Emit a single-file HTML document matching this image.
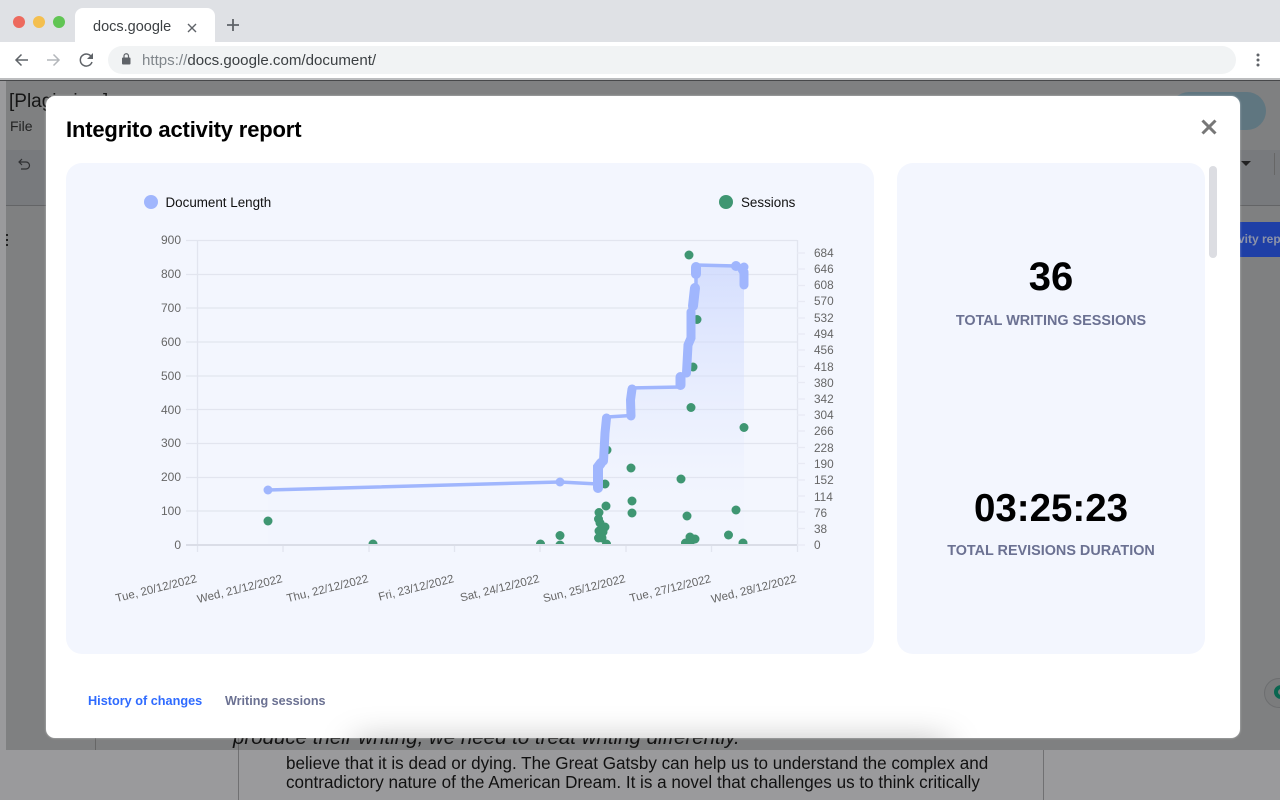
<!DOCTYPE html>
<html><head><meta charset="utf-8"><title>Integrito activity report</title>
<style>
*{box-sizing:border-box}
html,body{margin:0;padding:0;width:1280px;height:800px;overflow:hidden;background:#fff;font-family:"Liberation Sans",sans-serif}
.a{position:absolute}
#top{left:0;top:0;width:1280px;height:42px;background:#dfe1e5}
.dot{width:12px;height:12px;border-radius:50%;top:16px}
#tab{left:75px;top:8px;width:140px;height:34px;background:#fff;border-radius:8px 8px 0 0}
#bar{left:0;top:42px;width:1280px;height:37px;background:#fff}
#url{left:108px;top:46px;width:1128px;height:28px;border-radius:14px;background:#f1f3f4}
#page{left:0;top:79px;width:1280px;height:721px;background:#9a9a9c;overflow:hidden}
#dark{left:6px;top:2px;width:1274px;height:669px;background:#7f8081;overflow:hidden}
#modal{left:46px;top:96px;width:1194px;height:642px;background:#fff;border-radius:9px;overflow:hidden;box-shadow:0 0 2px rgba(255,255,255,.5)}
.card{background:#f3f6fe;border-radius:16px}
.stat{color:#000;font-weight:bold;text-align:center;left:897px;width:308px}
.lab{color:#6b7192;font-weight:bold;text-align:center;left:897px;width:308px;font-size:14.4px;white-space:nowrap}
svg text{font-family:"Liberation Sans",sans-serif}
</style></head><body>
<div class="a" id="top"></div>
<div class="a dot" style="left:13px;background:#ed6a5e"></div>
<div class="a dot" style="left:33px;background:#f4bf4f"></div>
<div class="a dot" style="left:53px;background:#61c554"></div>
<div class="a" id="tab"></div>
<div class="a" style="left:93px;top:19px;font-size:14.5px;color:#3c4043">docs.google</div>
<svg class="a" style="left:0;top:0" width="260" height="80" fill="none">
<path d="M188 24l8 8M196 24l-8 8" stroke="#5f6368" stroke-width="1.4"/>
<path d="M233 19v12M227 25h12" stroke="#5f6368" stroke-width="1.8"/>
</svg>
<div class="a" id="bar"></div>
<div class="a" id="url"></div>
<svg class="a" style="left:0;top:42px" width="140" height="36" fill="none">
<path d="M28 18H16M21.500 12.500L16 18l5.500 5.500" stroke="#5f6368" stroke-width="1.500"/>
<path d="M47 18h12M53.500 12.500L59 18l-5.500 5.500" stroke="#b4b7bb" stroke-width="1.500"/>
<path d="M91.500 15A6 6 0 1 0 92 20" stroke="#5f6368" stroke-width="1.500"/>
<path d="M93 11v6h-6z" fill="#5f6368"/>
<rect x="122" y="15.500" width="8.500" height="7" rx="1" fill="#5f6368"/>
<path d="M124 16v-2a2.200 2.200 0 0 1 4.500 0v2" stroke="#5f6368" stroke-width="1.200"/>
</svg>
<div class="a" style="left:142px;top:52px;font-size:15.100px;color:#80868b;white-space:nowrap">https://<span style="color:#3c4043">docs.google.com/document/</span></div>
<svg class="a" style="left:1250px;top:50px" width="16" height="20"><circle cx="8" cy="5" r="1.500" fill="#5f6368"/><circle cx="8" cy="10" r="1.500" fill="#5f6368"/><circle cx="8" cy="15" r="1.500" fill="#5f6368"/></svg>

<div class="a" id="page">
  <div class="a" id="dark">
    <div class="a" style="left:0;top:69px;width:1274px;height:56px;background:#787a7d"></div>
    <div class="a" style="left:0;top:124px;width:1274px;height:1px;background:#636466"></div>
    <div class="a" style="left:3px;top:10px;font-size:19px;color:#151515;white-space:nowrap">[Plagiarism]</div>
    <div class="a" style="left:4px;top:37px;font-size:14px;color:#222">File</div>
    <svg class="a" style="left:11px;top:76px" width="16" height="16" fill="none"><path d="M2 5h7a3.500 3.500 0 0 1 0 7H4M5 2L2 5l3 3" stroke="#2f3032" stroke-width="1.200"/></svg>
    <div class="a" style="left:0;top:153px;width:2px;height:2px;background:#222;box-shadow:0 5px 0 #222,0 10px 0 #222"></div>
    <div class="a" style="left:1164px;top:11px;width:96px;height:38px;border-radius:19px;background:#5f7680"></div>
    <div class="a" style="left:1235px;top:80px;border-left:5px solid transparent;border-right:5px solid transparent;border-top:5px solid #222"></div>
    <div class="a" style="left:1268px;top:72px;width:1px;height:22px;background:#666"></div>
    <div class="a" style="left:1230px;top:141px;width:44px;height:35px;background:#1f3fa6;color:#8d93a8;font-size:12px;font-weight:bold;line-height:35px;white-space:nowrap;overflow:hidden;text-indent:2px">vity report</div>
    <div class="a" style="left:1258px;top:597px;width:30px;height:30px;border-radius:50%;border:1px solid #6d6e70;background:#7b7c7d"></div>
    <div class="a" style="left:1268px;top:604px;width:14px;height:14px;border-radius:50%;border:4px solid #0a6650"></div>
    <div class="a" style="left:89px;top:650px;width:1px;height:19px;background:#666"></div>
    <div class="a" style="left:232px;top:650px;width:1px;height:19px;background:#666"></div>
    <div class="a" style="left:227px;top:645px;font-size:20.500px;font-style:italic;color:#111;white-space:nowrap">produce their writing, we need to treat writing differently.</div>
  </div>
  <div class="a" style="left:238px;top:671px;width:1px;height:50px;background:#707072"></div>
  <div class="a" style="left:1043px;top:671px;width:1px;height:50px;background:#707072"></div>
  <div class="a" style="left:286px;top:675px;font-size:17.080px;line-height:19px;color:#111;white-space:nowrap">believe that it is dead or dying. The Great Gatsby can help us to understand the complex and<br>contradictory nature of the American Dream. It is a novel that challenges us to think critically</div>
</div>
<div class="a" style="left:0;top:78px;width:1280px;height:2px;background:#bcbdbf"></div>
<div class="a" style="left:0;top:80px;width:1280px;height:1px;background:#47484a"></div>

<div class="a" id="modal">
  <div class="a" style="left:310px;top:648px;width:590px;height:22px;background:rgba(0,0,0,.36);filter:blur(17px)"></div>
</div>
<div class="a" style="left:66px;top:117px;font-size:22px;letter-spacing:-.17px;font-weight:bold;color:#000;white-space:nowrap">Integrito activity report</div>
<svg class="a" style="left:1200px;top:118px" width="18" height="18" fill="none"><path d="M2.500 2.500l13 13M15.500 2.500l-13 13" stroke="#777" stroke-width="3"/></svg>
<div class="a card" style="left:66px;top:163px;width:808px;height:491px"></div>
<div class="a card" style="left:897px;top:163px;width:308px;height:491px"></div>
<div class="a" style="left:1209px;top:166px;width:8px;height:92px;border-radius:4px;background:#dcdde2"></div>
<div class="a stat" style="top:254px;font-size:40px;line-height:46px">36</div>
<div class="a lab" style="top:313px">TOTAL WRITING SESSIONS</div>
<div class="a stat" style="top:486px;font-size:38.500px;line-height:46px">03:25:23</div>
<div class="a lab" style="top:543px">TOTAL REVISIONS DURATION</div>
<div class="a" style="left:88px;top:694px;font-size:12.700px;font-weight:bold;color:#2f6bff;white-space:nowrap">History of changes</div>
<div class="a" style="left:225px;top:694px;font-size:12.600px;font-weight:bold;color:#6b7192;white-space:nowrap">Writing sessions</div>

<svg class="a" style="left:0;top:0" width="1280" height="800" fill="none">
<defs>
<linearGradient id="g" x1="0" y1="265" x2="0" y2="500" gradientUnits="userSpaceOnUse"><stop offset="0" stop-color="#c9d5fd" stop-opacity=".72"/><stop offset="1" stop-color="#dfe6fe" stop-opacity=".05"/></linearGradient>
<clipPath id="c"><rect x="190" y="230" width="620" height="315"/></clipPath>
</defs>
<circle cx="151" cy="202" r="7" fill="#a0b6fd"/>
<text x="165.500" y="207" font-size="13.400" fill="#111">Document Length</text>
<circle cx="726" cy="202" r="7" fill="#3f9672"/>
<text x="741" y="207" font-size="13.400" fill="#111">Sessions</text>

<g stroke="#e2e5ef" stroke-width="1.300">
<path d="M186 240.500H797M186 274.500H797M186 308H797M186 342H797M186 376H797M186 409.500H797M186 443.500H797M186 477.500H797M186 511H797"/>
<path d="M197.500 240V552M797.500 240V552"/>
<path d="M283 545v7M369 545v7M454.500 545v7M540 545v7M626 545v7M711.500 545v7"/>
<path stroke="#e8eaf4" d="M797 253h8M797 269h8M797 285.500h8M797 301.500h8M797 318h8M797 334h8M797 350h8M797 366.500h8M797 382.500h8M797 399h8M797 415h8M797 431h8M797 447.500h8M797 463.500h8M797 480h8M797 496h8M797 512h8M797 528.500h8M797 545h8"/>
</g>
<g font-size="12" fill="#666" text-anchor="end">
<text x="181" y="244">900</text><text x="181" y="278">800</text><text x="181" y="312">700</text><text x="181" y="346">600</text><text x="181" y="380">500</text><text x="181" y="414">400</text><text x="181" y="447">300</text><text x="181" y="481">200</text><text x="181" y="515">100</text><text x="181" y="549">0</text>
</g>
<g font-size="11.800" fill="#666">
<text x="814" y="257">684</text><text x="814" y="273">646</text><text x="814" y="289">608</text><text x="814" y="305">570</text><text x="814" y="322">532</text><text x="814" y="338">494</text><text x="814" y="354">456</text><text x="814" y="371">418</text><text x="814" y="387">380</text><text x="814" y="403">342</text><text x="814" y="419">304</text><text x="814" y="435">266</text><text x="814" y="452">228</text><text x="814" y="468">190</text><text x="814" y="484">152</text><text x="814" y="501">114</text><text x="814" y="517">76</text><text x="814" y="533">38</text><text x="814" y="549">0</text>
</g>
<g font-size="11.500" fill="#666" text-anchor="end">
<text transform="translate(197.500 582) rotate(-14)">Tue, 20/12/2022</text>
<text transform="translate(283 582) rotate(-14)">Wed, 21/12/2022</text>
<text transform="translate(369 582) rotate(-14)">Thu, 22/12/2022</text>
<text transform="translate(454.500 582) rotate(-14)">Fri, 23/12/2022</text>
<text transform="translate(540 582) rotate(-14)">Sat, 24/12/2022</text>
<text transform="translate(626 582) rotate(-14)">Sun, 25/12/2022</text>
<text transform="translate(711.500 582) rotate(-14)">Tue, 27/12/2022</text>
<text transform="translate(797 582) rotate(-14)">Wed, 28/12/2022</text>
</g>
<path d="M268 490L560 482L598 484L598 467L601 463L605 457L607 417L631 415L631 388L681 387L681 377L687 373L690 337L693 300L696 265L736 266L744 267V545H268Z" fill="url(#g)"/>
<g fill="#3f9672" clip-path="url(#c)">
<circle cx="268" cy="521" r="4.500"/><circle cx="373" cy="544" r="4.500"/><circle cx="540.500" cy="544" r="4.500"/><circle cx="560" cy="535.500" r="4.500"/><circle cx="560" cy="545" r="4.500"/>
<circle cx="599" cy="512.500" r="4.500"/><circle cx="598.500" cy="519" r="4.500"/><circle cx="600" cy="523" r="4.500"/><circle cx="605" cy="527" r="4.500"/><circle cx="599" cy="531" r="4.500"/><circle cx="603" cy="532" r="4.500"/><circle cx="598.500" cy="538" r="4.500"/><circle cx="602" cy="538" r="4.500"/><circle cx="606.500" cy="544" r="4.500"/><circle cx="606" cy="506" r="4.500"/><circle cx="605" cy="484" r="4.500"/><circle cx="607" cy="450" r="4.500"/>
<circle cx="631" cy="468" r="4.500"/><circle cx="632" cy="501" r="4.500"/><circle cx="632" cy="513" r="4.500"/>
<circle cx="681" cy="479" r="4.500"/><circle cx="687" cy="516" r="4.500"/><circle cx="690" cy="537" r="4.500"/><circle cx="695" cy="539" r="4.500"/><circle cx="685.500" cy="543" r="4.500"/><circle cx="690" cy="543" r="4.500"/>
<circle cx="736" cy="510" r="4.500"/><circle cx="728.500" cy="535" r="4.500"/><circle cx="743" cy="543" r="4.500"/><circle cx="744" cy="427.500" r="4.500"/><circle cx="691" cy="407.500" r="4.500"/><circle cx="689" cy="255" r="4.500"/><circle cx="697" cy="319.500" r="4.500"/><circle cx="693" cy="367" r="4.500"/>
</g>
<path d="M186 545H797" stroke="#dadde7" stroke-width="2"/>
<path d="M268 490L560 482L598 484" stroke="#a0b6fd" stroke-width="3.500"/>
<path d="M607 417L631 415.500M631 388L681 387M696 265L736 266L744 267M696 273V288" stroke="#a0b6fd" stroke-width="3.500"/>
<g stroke="#a0b6fd" stroke-linecap="round" stroke-width="10">
<path d="M598 488V467L601 463" />
<path d="M603.500 461L605 433L606.500 418" stroke-width="9"/>
<path d="M631 416L630.500 400L632 389" stroke-width="9"/>
<path d="M680.500 385V377"/>
<path d="M686.500 373L688 345L691 338L691 312" stroke-width="9"/>
<path d="M693 306L695 288" />
<path d="M696 274V267"/>
<path d="M744 285V272" stroke-width="9"/>
<path d="M738 267L743 276" stroke-width="4"/>
</g>
<circle cx="268" cy="490" r="4.500" fill="#a0b6fd"/><circle cx="560" cy="482" r="4.500" fill="#a0b6fd"/><circle cx="736" cy="266" r="5" fill="#a0b6fd"/><circle cx="744" cy="267" r="4.500" fill="#a0b6fd"/>
</svg>
</body></html>
